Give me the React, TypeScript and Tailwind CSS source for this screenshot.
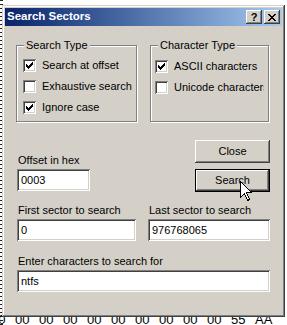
const FACE = "bg-[#d4d0c8]";
const RAISED =
  "shadow-[inset_-1px_-1px_#404040,inset_1px_1px_#ffffff,inset_-2px_-2px_#808080,inset_2px_2px_#d4d0c8]";
const SUNKEN =
  "shadow-[inset_1px_1px_#808080,inset_-1px_-1px_#ffffff,inset_2px_2px_#404040,inset_-2px_-2px_#d4d0c8]";

const hexRow = ["00", "00", "00", "00", "00", "00", "00", "00", "00", "00", "55", "AA"];

function HexRow() {
  return (
    <div className="flex text-[13px] leading-[15px] text-black">
      {hexRow.map((h, i) => (
        <span key={i} className="w-[24px] shrink-0">
          {h}
        </span>
      ))}
    </div>
  );
}

function CheckMark() {
  // classic 7x7 windows tick, one rect per run of pixels
  const runs: [number, number, number][] = [
    [6, 0, 1],
    [5, 1, 2],
    [0, 2, 1],
    [4, 2, 3],
    [0, 3, 2],
    [3, 3, 3],
    [0, 4, 5],
    [1, 5, 3],
    [2, 6, 1],
  ];
  return (
    <svg width="13" height="13" viewBox="0 0 13 13" shapeRendering="crispEdges" className="absolute left-0 top-0">
      {runs.map(([x, y, w], i) => (
        <rect key={i} x={x + 3} y={y + 3} width={w} height={1} fill="#000" />
      ))}
    </svg>
  );
}

function Check({ label, checked }: { label: string; checked?: boolean }) {
  return (
    <div className="flex h-[21px] items-center whitespace-nowrap">
      <div className={`relative h-[13px] w-[13px] shrink-0 bg-white ${SUNKEN}`}>{checked && <CheckMark />}</div>
      <span className="ml-[6px]">{label}</span>
    </div>
  );
}

function GroupBox({ title, className, children }: { title: string; className: string; children: React.ReactNode }) {
  return (
    <div className={`relative h-[77px] border border-[#808080] shadow-[inset_1px_1px_#ffffff,1px_1px_#ffffff] ${className}`}>
      <span className={`absolute -top-[7px] left-[7px] px-[2px] leading-[13px] ${FACE}`}>{title}</span>
      {children}
    </div>
  );
}

function Field({ label, value, className }: { label: string; value: string; className: string }) {
  return (
    <div className="flex flex-col">
      <span className="h-[13px] leading-[13px] pl-[1px]">{label}</span>
      <div className={`mt-[2px] flex h-[22px] items-center bg-white pl-[4px] ${SUNKEN} ${className}`}>{value}</div>
    </div>
  );
}

export default function App() {
  return (
    <div className="relative h-[325px] w-[287px] overflow-hidden bg-white font-['Liberation_Sans',Arial,sans-serif] text-[11px] text-black">
      {/* hex editor behind the dialog */}
      <div className="absolute -top-[12px] left-[-10px]">
        <HexRow />
      </div>
      <div className="absolute left-0 top-0 h-[325px] w-[3px] bg-[repeating-linear-gradient(to_bottom,#222_0_1px,transparent_1px_4px)]" />
      <div className="absolute left-[-9px] top-[312px]">
        <HexRow />
      </div>

      {/* dialog window */}
      <div
        className={`absolute left-[2px] top-[5px] flex h-[312px] w-[283px] flex-col p-[3px] ${FACE} shadow-[inset_-1px_-1px_#404040,inset_1px_1px_#d4d0c8,inset_-2px_-2px_#808080,inset_2px_2px_#ffffff]`}
      >
        <div className="flex h-[18px] items-center bg-gradient-to-r from-[#0a246a] to-[#a6caf0] pl-[2px] pr-[2px]">
          <span className="flex-1 text-[11.5px] font-bold text-white">Search Sectors</span>
          <div className={`flex h-[14px] w-[16px] items-center justify-center text-[11px] font-bold leading-none ${FACE} ${RAISED}`}>
            ?
          </div>
          <div className={`ml-[2px] flex h-[14px] w-[16px] items-center justify-center ${FACE} ${RAISED}`}>
            <svg width="8" height="7" viewBox="0 0 8 7" shapeRendering="crispEdges">
              <path d="M0 0h2v1h-2zM6 0h2v1h-2zM1 1h2v1h-2zM5 1h2v1h-2zM2 2h4v1h-4zM3 3h2v1h-2zM2 4h4v1h-4zM1 5h2v1h-2zM5 5h2v1h-2zM0 6h2v1h-2zM6 6h2v1h-2z" fill="#000" />
            </svg>
          </div>
        </div>

        <div className="flex flex-col pl-[11px] pr-[12px] pt-[19px]">
          <div className="flex gap-[13px]">
            <GroupBox title="Search Type" className="w-[121px] pl-[6px] pt-[9px]">
              <Check label="Search at offset" checked />
              <Check label="Exhaustive search" />
              <Check label="Ignore case" checked />
            </GroupBox>
            <GroupBox title="Character Type" className="w-[119px] pl-[4px] pt-[10px]">
              <Check label="ASCII characters" checked />
              <div className="w-[109px] overflow-hidden">
                <Check label="Unicode characters" />
              </div>
            </GroupBox>
          </div>

          <div className="mt-[1px] flex justify-between">
            <div className="mt-[31px] pl-[1px]">
              <Field label="Offset in hex" value="0003" className="w-[73px]" />
            </div>
            <div className="mt-[17px] flex flex-col gap-[6px]">
              <div className={`flex h-[23px] w-[75px] items-center justify-center ${FACE} ${RAISED}`}>Close</div>
              <div className={`relative flex h-[23px] w-[75px] items-center justify-center border border-black ${FACE} ${RAISED}`}>
                Search
                <svg
                  width="13"
                  height="21"
                  viewBox="0 0 13 21"
                  shapeRendering="crispEdges"
                  className="absolute left-[44px] top-[11px]"
                >
                  <path d="M0.5 0.5 L0.5 16.5 L4.5 12.5 L7.5 19.5 L9.5 18.5 L6.5 11.5 L11.5 11.5 Z" fill="#fff" stroke="#000" />
                </svg>
              </div>
            </div>
          </div>

          <div className="mt-[12px] flex justify-between pl-[1px]">
            <Field label="First sector to search" value="0" className="w-[119px]" />
            <Field label="Last sector to search" value="976768065" className="w-[122px]" />
          </div>

          <div className="mt-[14px] pl-[1px]">
            <Field label="Enter characters to search for" value="ntfs" className="w-full" />
          </div>
        </div>
      </div>
    </div>
  );
}
